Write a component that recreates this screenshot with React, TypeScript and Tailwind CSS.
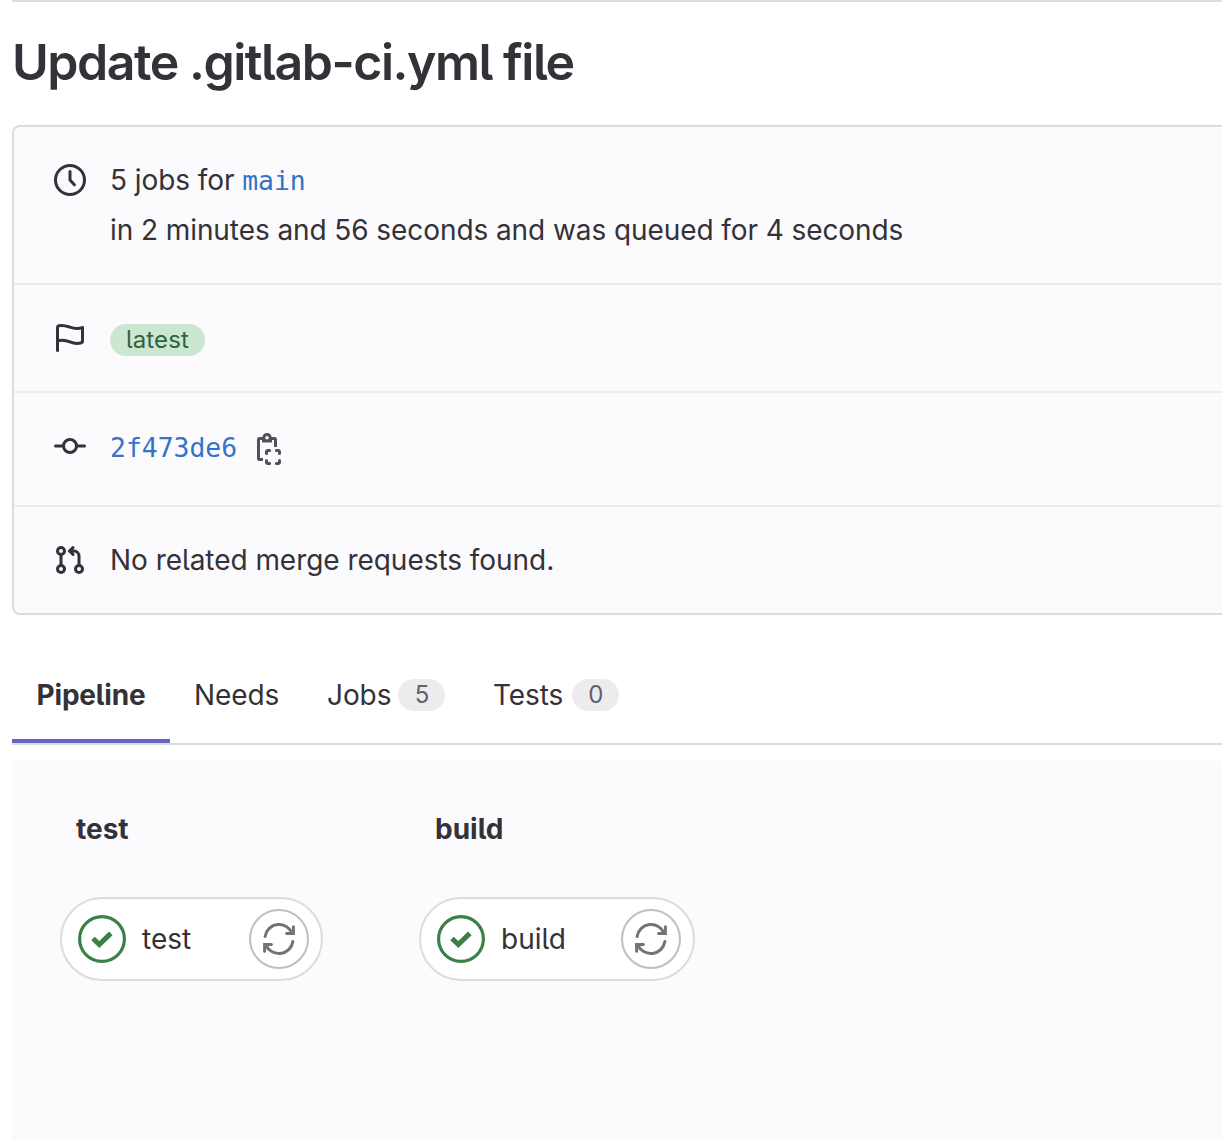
import type { ReactNode } from "react";

const stroke = { fill: "none", stroke: "currentColor", strokeWidth: 1.5 } as const;

function Icon({ children, className = "" }: { children: ReactNode; className?: string }) {
  return (
    <svg viewBox="0 0 16 16" className={`size-8 shrink-0 overflow-visible ${className}`} {...stroke}>
      {children}
    </svg>
  );
}

const ClockIcon = () => (
  <Icon>
    <circle cx="8" cy="8" r="7.25" />
    <path d="M8 3.75V8l2.2 2.4" strokeLinecap="round" strokeLinejoin="round" />
  </Icon>
);

const FlagIcon = () => (
  <Icon>
    <path d="M1.75 14.3V2.7c0-.4.25-.7.65-.8C4.6 1.4 6.2 2 8 2.6c2.2.8 4 .9 6.25.2" strokeLinecap="round" />
    <path d="M14.25 2.2v7.4c0 .35-.2.65-.55.75-2 .65-3.8.4-5.7-.4-2.2-.9-3.8-1.1-6.25-.6" />
  </Icon>
);

const CommitIcon = () => (
  <Icon>
    <circle cx="8" cy="8" r="3.25" />
    <path d="M.75 8h4M11.25 8h4" strokeLinecap="round" />
  </Icon>
);

const MergeRequestIcon = () => (
  <Icon>
    <circle cx="3.5" cy="3.5" r="1.75" />
    <circle cx="3.5" cy="12.5" r="1.75" />
    <circle cx="12.5" cy="12.5" r="1.75" />
    <path d="M3.5 5.25v5.5M12.5 10.75V6A2.5 2.5 0 0 0 10 3.5H8.3" />
    <path d="M9.5 1.8 7.8 3.5l1.7 1.7" strokeLinecap="round" />
  </Icon>
);

const CopyIcon = () => (
  <Icon className="text-[#535158]">
    <path d="M5 13.25H3.25a.5.5 0 0 1-.5-.5v-9.5a.5.5 0 0 1 .5-.5h1.5M9.25 2.75h1.5a.5.5 0 0 1 .5.5V7" />
    <path
      d="M7 0a2.3 2.3 0 0 0-2.25 1.9H4.5v2.3c0 .3.2.5.5.5h4c.3 0 .5-.2.5-.5V1.9h-.25A2.3 2.3 0 0 0 7 0Zm0 1.5a.9.9 0 1 1 0 1.8.9.9 0 0 1 0-1.8Z"
      fill="currentColor"
      stroke="none"
    />
    <path
      d="M6.75 10.3v-.8c0-.4.35-.75.75-.75h.8M11.7 8.75h.8c.4 0 .75.35.75.75v.8M13.25 13.7v.8c0 .4-.35.75-.75.75h-.8M8.3 15.25h-.8a.75.75 0 0 1-.75-.75v-.8"
      strokeLinecap="round"
    />
  </Icon>
);

const RetryIcon = () => (
  <Icon className="text-[#737278]">
    <path d="M1.05 6.7A7.1 7.1 0 0 1 14.6 5.1M14.95 9.3A7.1 7.1 0 0 1 1.4 10.9" strokeLinecap="round" />
    <path d="M15.2 1.9v3.35h-3.4M.8 14.1v-3.35h3.4" strokeLinecap="round" />
  </Icon>
);

const SuccessIcon = () => (
  <svg viewBox="0 0 48 48" className="size-12 shrink-0" fill="none" stroke="#3a8048">
    <circle cx="24" cy="24" r="22.4" strokeWidth="3.2" />
    <path d="m15 23.5 6.3 6.1 11.5-11.2" strokeWidth="5" />
  </svg>
);

function Row({ icon, children, className }: { icon: ReactNode; children: ReactNode; className: string }) {
  return (
    <div className={`flex gap-6 border-[#ececef] pl-10 ${className}`}>
      {icon}
      {children}
    </div>
  );
}

function CountBadge({ value }: { value: number }) {
  return (
    <span className="flex h-8 w-[47px] items-center justify-center rounded-full bg-[#ececef] text-2xl text-[#626168]">
      {value}
    </span>
  );
}

function Stage({ name, width, gap }: { name: string; width: string; gap: string }) {
  return (
    <section className={`${width} shrink-0 ${gap}`}>
      <h2 className="pl-4 text-[28px] leading-10 font-[650] tracking-normal">{name}</h2>
      <div className="mt-12 flex h-[84px] items-center rounded-full border-2 border-[#dcdcde] bg-white pr-3 pl-4">
        <SuccessIcon />
        <span className="ml-4 flex-1 tracking-normal">{name}</span>
        <button className="flex size-[60px] items-center justify-center rounded-full border-2 border-[#bfbfc3]">
          <RetryIcon />
        </button>
      </div>
    </section>
  );
}

export default function App() {
  return (
    <main className="h-[1140px] overflow-hidden bg-white pl-3 font-['Inter',sans-serif] text-[28px] leading-10 tracking-[-0.08px] whitespace-nowrap text-[#333238] [font-feature-settings:'cv05']">
      <div className="h-[125px] border-t-2 border-[#dcdcde] pt-[30px]">
        <h1 className="text-[50px] leading-[60px] font-semibold tracking-[-1.47px]">Update .gitlab-ci.yml file</h1>
      </div>

      <div className="h-[490px] rounded-l-lg border-2 border-r-0 border-[#dcdcde] bg-[#fbfafd]">
        <Row icon={<ClockIcon />} className="h-[158px] border-b-2 pt-[37px]">
          <div className="-mt-[9px] leading-[50px]">
            <p className="h-[50px]">
              5 jobs for <a className="font-['DejaVu_Sans_Mono',monospace] text-[26.4px] tracking-normal text-[#3373c8]">main</a>
            </p>
            <p>in 2 minutes and 56 seconds and was queued for 4 seconds</p>
          </div>
        </Row>
        <Row icon={<FlagIcon />} className="h-[108px] border-b-2 pt-[37px]">
          <span className="mt-0.5 flex h-8 w-[95px] items-center justify-center rounded-full bg-[#cbe6d1] text-2xl tracking-[0.1px] text-[#306440]">
            latest
          </span>
        </Row>
        <Row icon={<CommitIcon />} className="h-[114px] border-b-2 pt-[37px]">
          <a className="-mt-0.5 w-[119px] font-['DejaVu_Sans_Mono',monospace] text-[26.4px] tracking-normal text-[#3373c8]">2f473de6</a>
          <div className="pt-[3px]">
            <CopyIcon />
          </div>
        </Row>
        <Row icon={<MergeRequestIcon />} className="h-[106px] pt-[37px]">
          <span className="-mt-1 tracking-[-0.04px]">No related merge requests found.</span>
        </Row>
      </div>

      <nav className="mt-8 flex h-[98px] border-b-2 border-[#dcdcde]">
        <a className="flex w-[158px] items-center justify-center border-b-4 border-[#6666c4] pt-1 font-[650] tracking-[-0.2px]">
          Pipeline
        </a>
        <a className="flex w-[133px] items-center pl-6">Needs</a>
        <a className="flex w-[166px] items-center gap-[7px] pl-6">
          Jobs <CountBadge value={5} />
        </a>
        <a className="flex items-center gap-[9px] pl-6">
          Tests <CountBadge value={0} />
        </a>
      </nav>

      <div className="mt-4 flex h-[379px] bg-[#fbfafd] pt-12 pl-12">
        <Stage name="test" width="w-[263px]" gap="mr-24" />
        <Stage name="build" width="w-[276px]" gap="" />
      </div>
    </main>
  );
}
